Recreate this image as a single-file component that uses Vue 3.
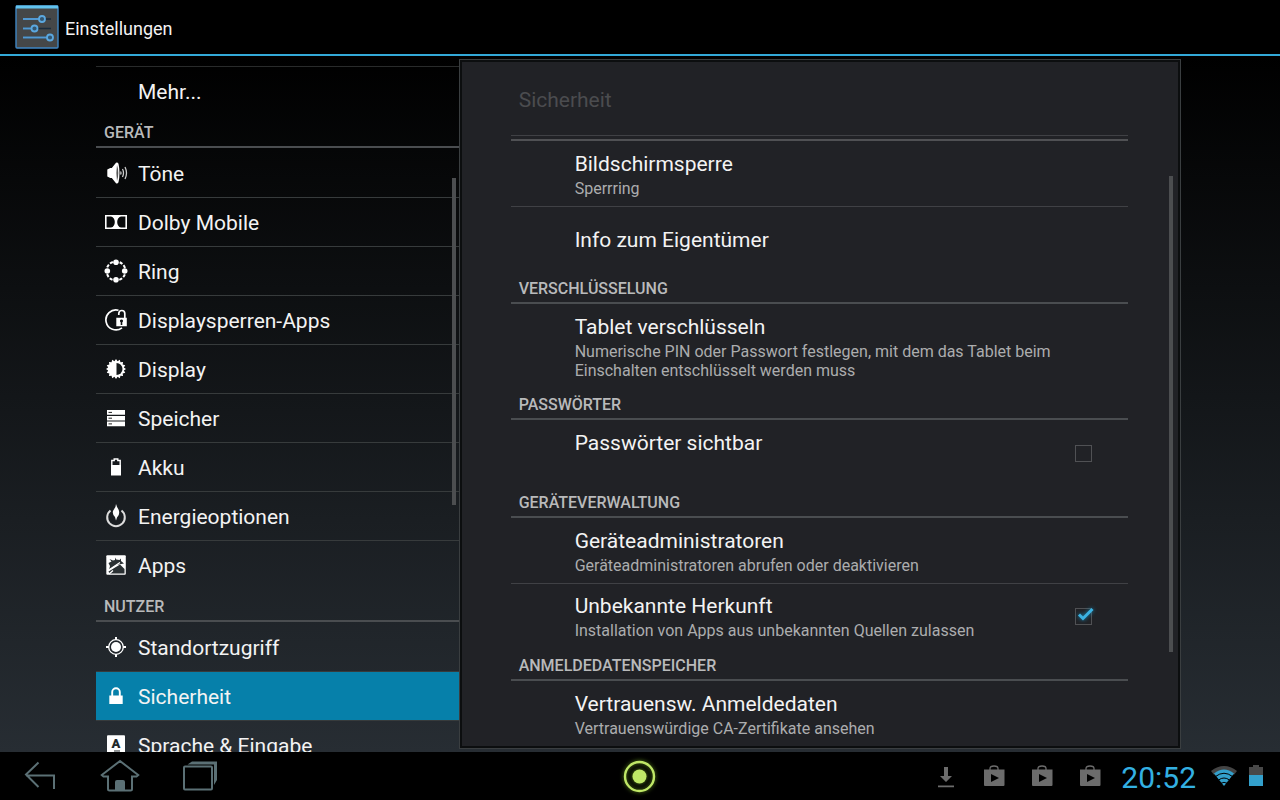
<!--
  Einstellungen: Seitenleiste mit Kategorien, Detailbereich "Sicherheit", Systemleiste
-->
<template>
  <div class="screen">
    <!-- Titelleiste -->
    <header class="action-bar">
      <svg class="app-icon" viewBox="0 0 44 44">
        <rect x="1" y="1" width="42" height="42" rx="1" fill="#454748" stroke="#3f86c4" stroke-width="1.4" />
        <path d="M1 .5h42v3H1z" fill="#62c3ee" />
        <path d="M8 14h28M8 23.500h28M8 32.500h28" stroke="#1b2c3c" stroke-width="1.500" />
        <path d="M8 14h17M8 23.500h9M8 32.500h25" stroke="#5299d2" stroke-width="1.800" />
        <g fill="#34566f" stroke="#5ba8e0" stroke-width="1.800">
          <circle cx="27" cy="14" r="3" />
          <circle cx="19.500" cy="23.500" r="3" />
          <circle cx="35" cy="32.500" r="3" />
        </g>
      </svg>
      <h1>Einstellungen</h1>
    </header>

    <main class="content">
      <!-- Kategorien -->
      <nav class="sidebar">
        <div class="side-list">
          <template v-for="item in menu" :key="item.label">
            <h2 v-if="item.header" class="group-header">{{ item.label }}</h2>
            <a v-else href="#" class="side-item" :class="{ active: item.label === current, last: item.last }" @click.prevent="current = item.label">
              <svg class="side-icon" viewBox="0 0 24 24" v-html="icons[item.icon] || ''"></svg>
              <span>{{ item.label }}</span>
            </a>
          </template>
        </div>
        <div class="scroll-thumb side-thumb"></div>
      </nav>

      <!-- Detailbereich -->
      <section class="panel">
        <div class="panel-inner">
          <h2 class="panel-title">Sicherheit</h2>
          <div class="prefs">
            <template v-for="pref in prefs" :key="pref.title">
              <h3 v-if="pref.header" class="group-header">{{ pref.title }}</h3>
              <label v-else-if="pref.check" class="pref" :class="{ last: pref.last }">
                <span class="pref-text">
                  <span class="pref-title">{{ pref.title }}</span>
                  <span class="pref-sub">{{ pref.sub }}</span>
                </span>
                <span class="check">
                  <input v-model="pref.checked" type="checkbox" />
                  <svg v-if="pref.checked" class="tick" viewBox="0 0 20 18">
                    <path d="M4 9.500l4 4L17.500 4" fill="none" stroke="#3cb2e2" stroke-width="3" />
                  </svg>
                </span>
              </label>
              <button v-else type="button" class="pref" :class="{ last: pref.last, single: !pref.sub }">
                <span class="pref-text">
                  <span class="pref-title">{{ pref.title }}</span>
                  <span v-if="pref.sub" class="pref-sub">{{ pref.sub }}</span>
                </span>
              </button>
            </template>
          </div>
          <div class="scroll-thumb panel-thumb"></div>
        </div>
      </section>
    </main>

    <!-- Systemleiste -->
    <footer class="system-bar">
      <div class="nav-keys">
        <button type="button" aria-label="Zurück">
          <svg viewBox="0 0 40 40"><path d="M18.500 6.500L6 18.500L18.500 31M6 19.500H34V33" /></svg>
        </button>
        <button type="button" aria-label="Startseite">
          <svg viewBox="0 0 40 40">
            <path d="M20 5L1.800 19L3.500 20.500H8V33Q8 34.500 9.500 34.500H30.500Q32 34.500 32 33V20.500H36.500L38.200 19Z" />
            <path class="solid" d="M15 35V26q0-2 2-2h6q2 0 2 2v9z" />
          </svg>
        </button>
        <button type="button" aria-label="Letzte Apps">
          <svg viewBox="0 0 40 40">
            <rect x="4" y="10.500" width="28" height="23" rx="1" />
            <path class="solid" d="M7.500 8.500L12 5.500H37V24L34 29V8.500z" />
          </svg>
        </button>
      </div>
      <button type="button" class="ring-key" aria-label="Acer Ring">
        <svg viewBox="0 0 40 40">
          <circle cx="19.500" cy="20.500" r="14.500" fill="none" stroke="#bfe767" stroke-width="2.400" />
          <circle cx="19.500" cy="20.500" r="7" fill="#bfe767" />
        </svg>
      </button>
      <div class="status">
        <svg class="notice" viewBox="0 0 24 24">
          <path d="M10 3h4v9h4l-6 6-6-6h4zM4 21.500h16v1.800H4z" fill="#6c6c6c" />
        </svg>
        <svg v-for="n in 3" :key="n" class="notice" viewBox="0 0 24 24">
          <path d="M8 6V4.500Q8 2 12 2t4 2.500V6" fill="none" stroke="#6c6c6c" stroke-width="1.300" />
          <path d="M2 5.500h20.500V21q0 1-1 1H3q-1 0-1-1zM9 10v8l8-4z" fill="#6c6c6c" fill-rule="evenodd" />
        </svg>
        <time class="clock">20:52</time>
        <svg class="wifi" viewBox="0 0 28 24">
          <path d="M1 7Q14-3 27 7l-3 3.800Q14 3 4 10.800z" fill="#444" />
          <path d="M4 9.500Q14 1.500 24 9.500L14 22z" fill="#33a0cc" />
          <path d="M5.500 12.500Q14 6 22.500 12.500M8.500 16Q14 12 19.500 16M11 19.300q3-2 6 0" fill="none" stroke="#000" />
        </svg>
        <svg class="battery" viewBox="0 0 14 22">
          <path d="M0 2h4V0h6v2h4v8H0z" fill="#484848" />
          <path d="M0 10h14v11H0z" fill="#33a0cc" />
        </svg>
      </div>
    </footer>
  </div>
</template>

<script setup>
import { ref } from 'vue'

const current = ref('Sicherheit')

// Kategorien der Seitenleiste
const menu = [
  { label: 'Mehr...', last: true },
  { label: 'GERÄT', header: true },
  { label: 'Töne', icon: 'sound' },
  { label: 'Dolby Mobile', icon: 'dolby' },
  { label: 'Ring', icon: 'ring' },
  { label: 'Displaysperren-Apps', icon: 'lockApps' },
  { label: 'Display', icon: 'display' },
  { label: 'Speicher', icon: 'storage' },
  { label: 'Akku', icon: 'battery' },
  { label: 'Energieoptionen', icon: 'energy' },
  { label: 'Apps', icon: 'apps', last: true },
  { label: 'NUTZER', header: true },
  { label: 'Standortzugriff', icon: 'location' },
  { label: 'Sicherheit', icon: 'lock' },
  { label: 'Sprache & Eingabe', icon: 'language' },
]

// Einträge im Detailbereich
const prefs = ref([
  { title: 'Bildschirmsperre', sub: 'Sperrring' },
  { title: 'Info zum Eigentümer', last: true },
  { title: 'VERSCHLÜSSELUNG', header: true },
  { title: 'Tablet verschlüsseln', sub: 'Numerische PIN oder Passwort festlegen, mit dem das Tablet beim Einschalten entschlüsselt werden muss', last: true },
  { title: 'PASSWÖRTER', header: true },
  { title: 'Passwörter sichtbar', sub: '', check: true, checked: false, last: true },
  { title: 'GERÄTEVERWALTUNG', header: true },
  { title: 'Geräteadministratoren', sub: 'Geräteadministratoren abrufen oder deaktivieren' },
  { title: 'Unbekannte Herkunft', sub: 'Installation von Apps aus unbekannten Quellen zulassen', check: true, checked: true, last: true },
  { title: 'ANMELDEDATENSPEICHER', header: true },
  { title: 'Vertrauensw. Anmeldedaten', sub: 'Vertrauenswürdige CA-Zertifikate ansehen', last: true },
])

// Zacken des Display-Symbols
const rays = Array.from({ length: 32 }, (_, i) => {
  const r = i % 2 ? 8 : 10
  const a = (i * Math.PI) / 16
  return `${(12 + r * Math.cos(a)).toFixed(2)},${(12 + r * Math.sin(a)).toFixed(2)}`
}).join(' ')

const icons = {
  sound: `<path d="M3.300 8.500l3-1.500h1.500L12 1.800q1.500-1 2.500 1 2 9.200 0 18.400-1 2-2.500 1L7.800 17H6.300l-3-1.500z" fill="#fff"/>
    <path d="M13 4q2.600 8 0 16-1.300-8 0-16z" fill="#555"/>
    <path d="M16.500 10.500q1 1.500 0 3M18.500 8q2 4 0 8M21 6q3 6 0 12" fill="none" stroke="#ccc" stroke-width="1.300"/>`,
  dolby: `<path d="M1 5h22v14H1zM2.600 6.600v10.800h18.800V6.600z" fill="#fff" fill-rule="evenodd"/>
    <path d="M7 6h10q-3.800 2-3.800 6t3.800 6H7q3.800-2 3.800-6T7 6z" fill="#fff"/>`,
  ring: `<circle cx="12" cy="12" r="9.500" fill="none" stroke="#fff" stroke-width="2" stroke-dasharray="3.200 1.600 3.200 6.920" stroke-dashoffset="-3.460"/>
    <g fill="#fff"><circle cx="12" cy="3.300" r="2.800"/><circle cx="12" cy="20.700" r="2.800"/><circle cx="3.300" cy="12" r="2.800"/><circle cx="20.700" cy="12" r="2.800"/></g>`,
  lockApps: `<path d="M14.500 2.200A10 10 0 1 0 18 19.800" fill="none" stroke="#fff" stroke-width="1.700"/>
    <path d="M14.800 7V5.500a3 3 0 0 1 6 0V10" fill="none" stroke="#fff" stroke-width="1.700"/>
    <path d="M12.300 9.700h10.500v8.500H12.300zM17.500 11.500a1.500 1.500 0 0 0-.800 2.800V17h1.600v-2.700a1.500 1.500 0 0 0-.800-2.800z" fill="#fff" fill-rule="evenodd"/>`,
  display: `<polygon points="${rays}" fill="#fff"/><path d="M12.500 6a6 6 0 0 1 0 12z" fill="#15191b"/>`,
  storage: `<path d="M3 4h18v4.800H3zM3 9.900h18v4.600H3zM3 15.500h18v4.800H3z" fill="#fff"/>
    <path d="M4.500 6.400h3.500M4.500 12.200h3.500M4.500 17.900h3.500" stroke="#222"/>`,
  battery: `<path d="M7.800 10V5.500h2.400V4h3.600v1.500h2.400V10" fill="none" stroke="#fff" stroke-width="1.400"/><path d="M7 10h10v10.500H7z" fill="#fff"/>`,
  energy: `<path d="M6.500 6.500a8.800 8.800 0 1 0 11 0" fill="none" stroke="#ddd" stroke-width="2"/>
    <path d="M12 0q.800 3 2.500 5.500 2 4.500-1.500 8l-1 3-1-3.500Q7.500 9.500 9.500 6 12 3.500 12 0z" fill="#fff"/>`,
  apps: `<rect x="2.300" y="2.300" width="19.500" height="19.500" rx="1" fill="#fff"/>
    <path d="M4.500 10l3-1.500L5.500 6l3.500 1.500 2-.600V4.500l1.200 2 3.300.500 1.500-1.500v2.500l3 2.500-8 1.500L5 17l1-4z" fill="#2a3033"/>
    <path d="M4.500 18.500L16 11.500l4.500 4.500v4.500H5.500z" fill="#2a3033"/>
    <path d="M4 17.500L16 9.500M5 21l4-3.500" stroke="#fff" stroke-width="1.300"/>`,
  location: `<circle cx="12" cy="12" r="5" fill="#fff"/><circle cx="12" cy="12" r="7.300" fill="none" stroke="#fff" stroke-width="1.300"/>
    <path d="M12 2v3M12 19v3M2 12h3M19 12h3" stroke="#fff" stroke-width="2"/>`,
  lock: `<path d="M8.200 12V8a3.800 3.800 0 0 1 7.600 0v4" fill="none" stroke="#fff" stroke-width="1.900"/><path d="M5.300 11.500h13.400V20H5.300z" fill="#fff"/>`,
  language: `<rect x="3" y="2.300" width="18" height="19" rx="1" fill="#fff"/>
    <text x="12" y="15" text-anchor="middle" font-family="Roboto, sans-serif" font-weight="900" font-size="13" fill="#23292d">A</text>
    <path d="M10 18h6" stroke="#23292d"/>`,
}
</script>

<style>
html, body { background: #000; overflow: hidden; }
</style>

<style scoped>
* { box-sizing: border-box; }
.screen { display: flex; flex-direction: column; height: 100vh; background: #000; color: #f3f3f3; font-family: Roboto, "Noto Sans", sans-serif; }
h1, h2, h3 { margin: 0; font-weight: normal; }
button { font: inherit; color: inherit; background: none; border: 0; padding: 0; cursor: pointer; }
a { color: inherit; text-decoration: none; }

/* Titelleiste */
.action-bar { display: flex; align-items: center; flex: none; gap: 6px; height: 56px; padding: 0 15px; border-bottom: 2px solid #33a9d8; }
.action-bar h1 { padding-top: 3px; font-size: 18px; line-height: 24px; }
.app-icon { width: 44px; height: 44px; }

/* Inhalt */
.content { display: grid; grid-template-columns: 1fr 2fr; flex: 1; min-height: 0; padding: 0 96px; background: linear-gradient(#000, #272d33); }

/* Seitenleiste */
.sidebar { position: relative; overflow: hidden; padding-top: 10px; }
.side-list { border-top: 1px solid #292b2b; }
.side-item { display: flex; align-items: center; gap: 10px; height: 49px; padding: 0 8px; border-bottom: 1px solid #373b3c; font-size: 21px; }
.side-item span { padding-top: 2px; }
.side-item.last { border-color: transparent; }
.side-item.active { background: #0680aa; }
.side-icon { width: 24px; height: 24px; }
.group-header { height: 32px; margin-bottom: 1px; padding: 0 8px; border-bottom: 2px solid #4a4d50; color: #b9babb; font-size: 16px; line-height: 33px; font-weight: 500; }
.scroll-thumb { position: absolute; width: 4px; background: #4c4e50; }
.side-thumb { right: 3px; top: 17.5%; height: 47%; }

/* Detailbereich */
.panel { margin: 3px 3px 3px 0; padding: 2px; min-height: 0; border: 1px solid #3a3e40; background: #0c0e0f; }
.panel-inner { position: relative; height: 100%; padding: 0 50px 0 49px; overflow: hidden; background: #212226; }
.panel-title { height: 74px; padding: 0 8px; border-bottom: 1px solid #404145; color: #4b4c4f; font-size: 21px; line-height: 76px; }
.prefs { margin-top: 3px; padding-top: 1px; border-top: 2px solid #505154; }
.pref { display: flex; align-items: flex-start; width: 100%; min-height: 65px; padding: 9px 32px 7px 64px; border-bottom: 1px solid #404145; text-align: left; }
.pref.last { border-color: transparent; }
.pref.single { align-items: center; }
.pref-text { flex: 1; max-width: 484px; }
.pref-title, .pref-sub { display: block; }
.pref-title { font-size: 21px; line-height: 27px; }
.pref-sub { margin-top: 1px; color: #acadae; font-size: 16px; line-height: 19px; }
.check { position: relative; flex: none; align-self: center; width: 21px; height: 18px; margin-left: auto; }
.check input { appearance: none; display: block; width: 17px; height: 17px; margin: 0; border: 1px solid #505154; }
.tick { position: absolute; left: 0; top: -3px; width: 20px; height: 18px; filter: drop-shadow(0 0 2px #1587b3); }
.panel-thumb { right: 5px; top: 16.7%; height: 69.6%; }

/* Systemleiste */
.system-bar { display: grid; grid-template-columns: 1fr auto 1fr; align-items: center; flex: none; height: 48px; background: #000; }
.nav-keys { display: flex; gap: 40px; padding-left: 20px; }
.nav-keys svg, .ring-key svg { display: block; width: 40px; height: 40px; }
.nav-keys path, .nav-keys rect { fill: none; stroke: #5b7075; stroke-width: 2; }
.nav-keys .solid { fill: #5b7075; stroke: none; }
.ring-key svg { filter: drop-shadow(0 0 2px #5f8b1c); }
.status { display: flex; align-items: center; justify-content: flex-end; padding-right: 17px; }
.notice { width: 24px; height: 24px; margin-right: 24px; }
.clock { margin: 0 14px 0 -5px; padding-top: 3px; color: #33b0e2; font-size: 30px; line-height: 40px; }
.wifi { width: 28px; height: 24px; margin-right: 11px; }
.battery { width: 14px; height: 22px; }
</style>
